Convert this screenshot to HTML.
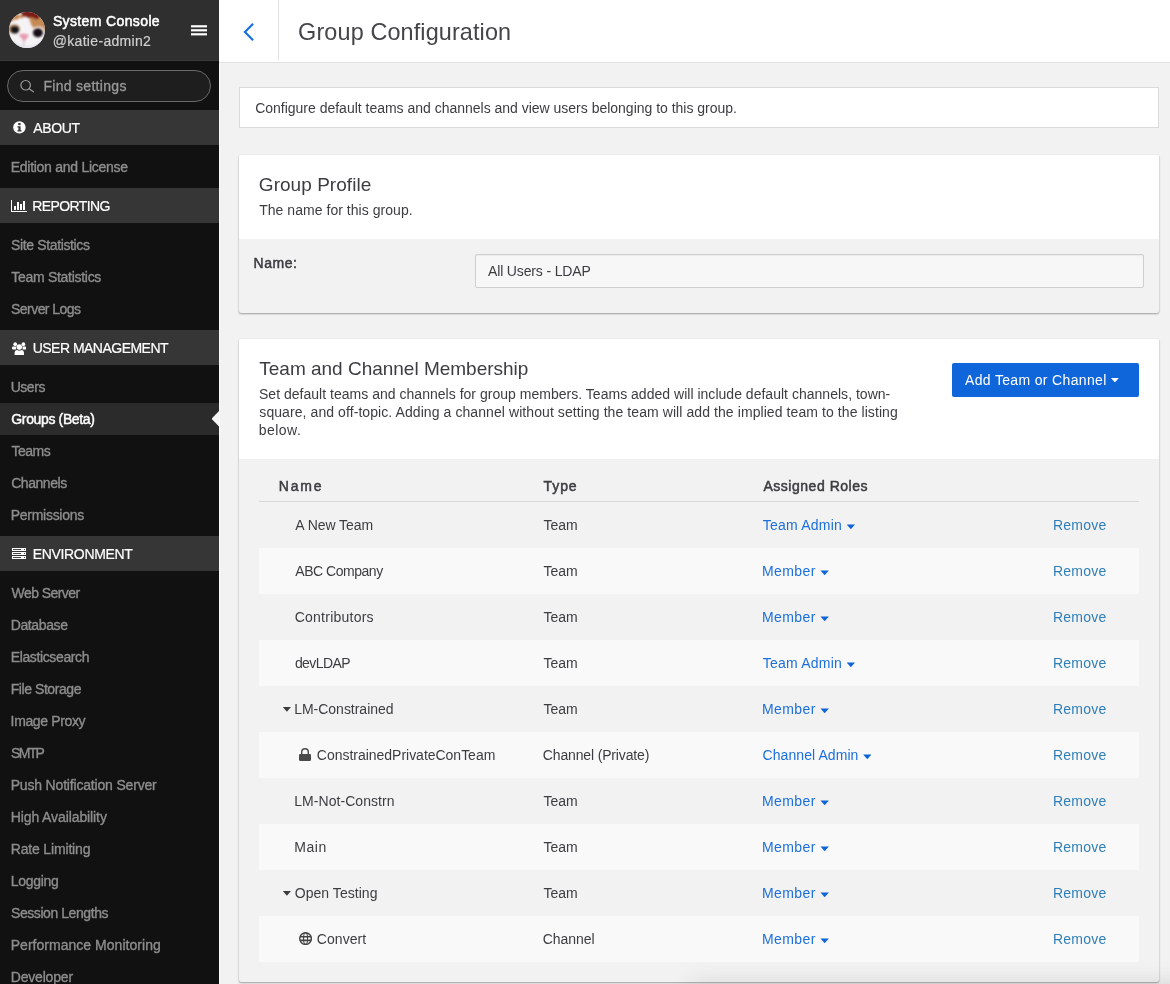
<!DOCTYPE html>
<html lang="en">
<head>
<meta charset="utf-8">
<title>Group Configuration - System Console</title>
<style>
*{box-sizing:border-box;margin:0;padding:0}
html,body{width:1170px;height:984px;overflow:hidden;background:#f2f2f2}
body{opacity:.999;font-family:"Liberation Sans",sans-serif;font-size:14px;color:#3d3c40;position:relative}
a{text-decoration:none}
/* ---------- sidebar ---------- */
#sb{position:absolute;left:0;top:0;width:219px;height:984px;background:#111;overflow:hidden}
#sbh{position:absolute;left:0;top:0;width:219px;height:61px;background:#2f2f2f;border-bottom:1px solid #393939}
#sbh .t1{position:absolute;left:53px;top:12px;font-weight:normal;-webkit-text-stroke:.55px #fff;color:#fff;font-size:14px;line-height:18px;letter-spacing:-.2px;white-space:nowrap}
#sbh .t2{position:absolute;left:53px;top:32px;color:#cfcfcf;-webkit-text-stroke:.2px #cfcfcf;font-size:14px;line-height:18px;letter-spacing:.25px;white-space:nowrap}
#avatar{position:absolute;left:9px;top:12px;width:36px;height:36px}
#burger{position:absolute;left:191px;top:25px;width:16px;height:11px}
#search{position:absolute;left:7px;top:70px;width:204px;height:32px;border:1px solid #6a6a6a;border-radius:16px;background:#1e1e1e}
#search span{position:absolute;left:36px;top:6px;line-height:18px;color:#999;font-size:14px;white-space:nowrap;letter-spacing:.2px}
#search svg{position:absolute;left:12px;top:8px}
.cat{position:absolute;left:0;width:219px;height:35px;background:#363636;color:#fff;font-size:14px;line-height:35px;white-space:nowrap}
.cat span{position:absolute;left:33px;top:1px}
.cat svg{position:absolute}
.it{position:absolute;left:11px;height:18px;line-height:18px;color:#8d8d8d;font-size:14px;white-space:nowrap;letter-spacing:-.2px}
.it{-webkit-text-stroke:.35px #8d8d8d}
.it.on{color:#fff;-webkit-text-stroke:.45px #fff}
.cat span{-webkit-text-stroke:.2px #fff}
#search span{-webkit-text-stroke:.3px #999}
#sel{position:absolute;left:0;top:403px;width:219px;height:32px;background:#2b2b2b}
#sel i{position:absolute;right:0;top:8px;width:7.5px;height:15.6px;background:#f6f6f6;clip-path:polygon(100% 0,0 50%,100% 100%)}
/* ---------- main ---------- */
#edge{position:absolute;left:219px;top:63px;width:1px;height:921px;background:#fbfbfb}
#hd{position:absolute;left:219px;top:0;width:951px;height:63px;background:#fff;border-bottom:1px solid #e2e2e2}
#hd .sep{position:absolute;left:59px;top:0;width:1px;height:60px;background:#e1e1e1}
#hd h1{position:absolute;left:80px;top:15px;font-size:23.4px;line-height:34px;font-weight:normal;color:#454448;white-space:nowrap}
#back{position:absolute;left:23.3px;top:21px}
#banner{position:absolute;left:239px;top:87px;width:920px;height:41px;background:#fff;border:1px solid #dadada}
#banner span{position:absolute;left:15px;top:11px;line-height:18px;white-space:nowrap}
.panel{position:absolute;left:239px;width:920px;background:#f2f2f2;box-shadow:0 1px 2px rgba(0,0,0,.35),0 0 1px rgba(0,0,0,.15);border-radius:2px}
.panel .ph{position:absolute;left:0;top:0;width:920px;background:#fff;border-radius:2px 2px 0 0}
.panel h2{position:absolute;left:20px;font-size:19px;font-weight:normal;line-height:24px;color:#3d3c40;white-space:nowrap}
.panel .sub{position:absolute;left:20px;line-height:18px;color:#3d3c40;white-space:nowrap}
.panel .sub span{display:inline-block}
#p1{top:155px;height:158px}
#p1 .ph{height:84px}
#p1 label{position:absolute;left:15px;top:99px;font-weight:normal;-webkit-text-stroke:.5px #3d3c40;line-height:18px}
#p1 .inp{position:absolute;left:236px;top:99px;width:669px;height:34px;border:1px solid #cfcfcf;border-radius:2px;background:#f7f7f7;box-shadow:inset 0 1px 1px rgba(0,0,0,.05)}
#p1 .inp span{position:absolute;left:12px;top:7px;line-height:18px;white-space:nowrap}
#p2{top:339px;height:643px}
#p2 .ph{height:120px}
#btn{position:absolute;left:713px;top:24px;width:187px;height:34px;background:#0f66da;border-radius:2px;color:#fff;line-height:34px;white-space:nowrap}
#btn span{position:absolute;left:13px;top:0;letter-spacing:.3px}
#btn i{position:absolute;left:158.8px;top:14.8px;width:8.2px;height:4.7px;background:#fff;clip-path:polygon(0 0,100% 0,50% 100%)}
#tbl{position:absolute;left:20px;top:120px;width:880px}
#tbl .th{position:relative;height:43px;border-bottom:1px solid #d8d8d8;font-weight:normal;-webkit-text-stroke:.5px #3d3c40}
#tbl .th span{position:absolute;top:18px;line-height:18px}
.row{position:relative;height:46px;line-height:46px;white-space:nowrap}
.row:nth-child(odd){background:#f9f9f9}
.row span,.row a{position:absolute;top:0}
.row .n{left:36px}
.row .n.ch{left:58px}
.row .ty{left:284px}
.row .ro{left:504px;color:#1b6fdd}
.row .ro em{font-style:normal}
.row .ro i{display:inline-block;vertical-align:middle;margin-left:4.6px;position:relative;top:0.5px;width:8.4px;height:4.7px;background:#0f63d8;clip-path:polygon(0 0,100% 0,50% 100%)}
.row .rm{left:794px;color:#2f7fb8}
.row .car{left:23.8px;top:21px;width:8.2px;height:4.8px;background:#3d3c40;clip-path:polygon(0 0,100% 0,50% 100%)}
.row svg{position:absolute}
#glow{position:absolute;left:700px;top:994px;width:520px;height:20px;box-shadow:0 0 24px 10px rgba(0,0,0,.12);pointer-events:none}
/*FIT-START*/
#sbh .t1{letter-spacing:0.37px;margin-left:-0.1px}
#sbh .t2{letter-spacing:0.32px;margin-left:-0.3px}
#search span{letter-spacing:0.30px;margin-left:-0.6px}
#c1{letter-spacing:-0.35px;margin-left:0.2px}
#c2{letter-spacing:-0.61px;margin-left:-0.8px}
#c3{letter-spacing:-0.52px;margin-left:-0.3px}
#c4{letter-spacing:-0.35px;margin-left:-0.2px}
#i1{letter-spacing:-0.27px;margin-left:-0.3px}
#i2{letter-spacing:-0.36px;margin-left:-0.0px}
#i3{letter-spacing:-0.29px;margin-left:0.3px}
#i4{letter-spacing:-0.54px;margin-left:-0.0px}
#i5{letter-spacing:-0.47px;margin-left:-0.3px}
#i6{letter-spacing:-0.36px;margin-left:0.3px}
#i7{letter-spacing:-0.51px;margin-left:0.5px}
#i8{letter-spacing:-0.45px;margin-left:0.2px}
#i9{letter-spacing:-0.27px;margin-left:-0.3px}
#i10{letter-spacing:-0.55px;margin-left:0.5px}
#i11{letter-spacing:-0.38px;margin-left:-0.3px}
#i12{letter-spacing:-0.37px;margin-left:-0.3px}
#i13{letter-spacing:-0.43px;margin-left:-0.3px}
#i14{letter-spacing:-0.36px;margin-left:-0.4px}
#i15{letter-spacing:-1.67px;margin-left:-0.0px}
#i16{letter-spacing:-0.18px;margin-left:-0.3px}
#i17{letter-spacing:-0.10px;margin-left:-0.3px}
#i18{letter-spacing:-0.16px;margin-left:-0.3px}
#i19{letter-spacing:-0.28px;margin-left:-0.3px}
#i20{letter-spacing:-0.43px;margin-left:-0.0px}
#i21{letter-spacing:0.03px;margin-left:-0.3px}
#i22{letter-spacing:-0.18px;margin-left:-0.3px}
#hd h1{letter-spacing:0.13px;margin-left:-0.9px}
#banner span{letter-spacing:-0.01px;margin-left:0.2px}
#p1 h2{letter-spacing:0.04px;margin-left:-0.2px}
#p1 .sub{letter-spacing:0.04px;margin-left:0.2px}
#p1 label{letter-spacing:0.57px;margin-left:-0.5px}
#p1 .inp span{letter-spacing:-0.15px;margin-left:-0.0px}
#p2 h2{letter-spacing:-0.01px;margin-left:0.3px}
#l1{letter-spacing:0.02px;margin-left:0.0px}
#l2{letter-spacing:0.08px;margin-left:0.3px}
#l3{letter-spacing:0.48px;margin-left:-0.3px}
#btn span{letter-spacing:0.34px}
#h1{letter-spacing:1.84px;margin-left:-0.3px}
#h2{letter-spacing:0.88px;margin-left:0.6px}
#h3{letter-spacing:0.53px;margin-left:0.4px}
#n1{letter-spacing:-0.06px;margin-left:0.3px}
#n2{letter-spacing:-0.47px;margin-left:0.3px}
#n3{letter-spacing:0.24px;margin-left:-0.3px}
#n4{letter-spacing:-0.57px;margin-left:-0.1px}
#n5{letter-spacing:-0.02px;margin-left:-0.8px}
#n6{letter-spacing:-0.02px;margin-left:-0.2px}
#n7{letter-spacing:0.06px;margin-left:-0.8px}
#n8{letter-spacing:0.56px;margin-left:-0.8px}
#n9{letter-spacing:0.05px;margin-left:-0.3px}
#n10{letter-spacing:0.06px;margin-left:-0.2px}
.ty.tm{letter-spacing:0.05px;margin-left:0.4px}
#t6{letter-spacing:-0.15px;margin-left:-0.2px}
#t10{letter-spacing:-0.05px;margin-left:-0.2px}
.ro.ta em{letter-spacing:0.22px;margin-left:-0.2px}
.ro.me em{letter-spacing:0.42px;margin-left:-1.0px}
.ro.ca em{letter-spacing:0.08px;margin-left:-0.5px}
.rm{letter-spacing:0.21px}
/*FIT-END*/
</style>
</head>
<body>
<div id="sb">
  <div id="sbh">
    <svg id="avatar" viewBox="0 0 36 36"><defs><clipPath id="ac"><circle cx="18" cy="18" r="18"/></clipPath><filter id="bl" x="-20%" y="-20%" width="140%" height="140%"><feGaussianBlur stdDeviation="0.8"/></filter></defs>
      <g clip-path="url(#ac)"><rect width="36" height="36" fill="#f5f3f5"/>
      <g filter="url(#bl)">
        <path d="M20 4 L40 0 L40 24 L33 15 L28 14.5 L24 16 L21.5 11 L20.5 7 Z" fill="#c58a54"/>
        <path d="M1 8 L6 2 L15 4 L13 6.5 L10.5 5.5 L8 8 L5.5 7 L3 10Z" fill="#c48550"/>
        <path d="M11 -2 L33 -2 L31 6 L27 7.5 L23 5.5 L19.5 6 L17 4.5 L13.5 4.5 Z" fill="#7d1a17"/>
        <ellipse cx="5.2" cy="17" rx="5.6" ry="4.6" fill="#a87850"/>
        <ellipse cx="5.8" cy="17.7" rx="4.2" ry="3.7" fill="#0d171c"/>
        <ellipse cx="28.9" cy="20.8" rx="5" ry="4.5" fill="#190d17"/>
        <path d="M10 22.6 Q15 20.8 19.8 23 Q19 26 16.8 27 L15.6 29.5 Q14.5 29.8 13.8 28.6 L13.2 26.6 Q10.8 25.6 10 22.6Z" fill="#e89ab2"/>
        <path d="M14.6 29 L15.4 29 L15 36 L13.8 36Z" fill="#cdb0c8"/>
        <path d="M2 27 Q18 42 34 27 L34 40 L2 40Z" fill="#e4e1ec"/>
      </g></g>
    </svg>
    <div class="t1">System Console</div>
    <div class="t2">@katie-admin2</div>
    <svg id="burger" viewBox="0 0 16 11"><rect x="0" y="0.2" width="16" height="2.2" fill="#fff"/><rect x="0" y="4.2" width="16" height="2.2" fill="#fff"/><rect x="0" y="8.2" width="16" height="2.2" fill="#fff"/></svg>
  </div>
  <div id="search">
    <svg width="16" height="16" viewBox="0 0 16 16" fill="none" stroke="#9a9a9a" stroke-width="1.2" stroke-linecap="round"><circle cx="5.65" cy="6.25" r="4.75"/><path d="M9.1 9.7 L13.4 12.8"/></svg>
    <span>Find settings</span>
  </div>

  <div class="cat" style="top:110px">
    <svg style="left:12.8px;top:11.4px" width="12.8" height="12.8" viewBox="0 0 13 13"><circle cx="6.5" cy="6.5" r="6.3" fill="#fff"/><rect x="5.3" y="2.1" width="2.4" height="2.1" fill="#363636"/><path d="M4.5 5.3h3.2v4h1v1.4H4.5V9.3h1V6.7h-1z" fill="#363636"/></svg>
    <span id="c1">ABOUT</span></div>
  <div id="i1" class="it" style="top:158px">Edition and License</div>

  <div class="cat" style="top:188px">
    <svg style="left:11px;top:12px" width="16" height="12" viewBox="0 0 16 12" fill="#fff" shape-rendering="crispEdges"><rect x="0" y="0" width="1" height="12"/><rect x="0" y="11" width="16" height="1"/><rect x="3" y="6" width="2" height="4"/><rect x="6" y="2" width="2" height="8"/><rect x="9" y="4" width="2" height="6"/><rect x="12" y="1" width="2" height="9"/></svg>
    <span id="c2">REPORTING</span></div>
  <div id="i2" class="it" style="top:236px">Site Statistics</div>
  <div id="i3" class="it" style="top:268px">Team Statistics</div>
  <div id="i4" class="it" style="top:300px">Server Logs</div>

  <div class="cat" style="top:330px">
    <svg style="left:11.6px;top:11.6px" width="14.6" height="13.8" viewBox="0 0 15 14" preserveAspectRatio="none" fill="#fff"><circle cx="3.3" cy="2.2" r="1.9"/><circle cx="11.7" cy="2.2" r="1.9"/><path d="M0 5.8Q0 4.6 1.2 4.6H4.6Q3.6 6.2 4.4 7.6H1.2Q0 7.6 0 6.6z"/><path d="M15 5.8Q15 4.6 13.800000000000001 4.6H10.4Q11.4 6.2 10.6 7.6H13.8Q15 7.6 15 6.6z"/><circle cx="7.5" cy="5.2" r="2.8"/><path d="M2.6 12.2Q2.6 8.2 5.2 8.2Q7.5 9.600000000000001 9.8 8.2Q12.4 8.2 12.4 12.2Q12.4 13.8 10.8 13.8H4.2Q2.6 13.8 2.6 12.2z"/></svg>
    <span id="c3">USER MANAGEMENT</span></div>
  <div id="i5" class="it" style="top:378px">Users</div>
  <div id="sel"><i></i></div>
  <div id="i6" class="it on" style="top:410px">Groups (Beta)</div>
  <div id="i7" class="it" style="top:442px">Teams</div>
  <div id="i8" class="it" style="top:474px">Channels</div>
  <div id="i9" class="it" style="top:506px">Permissions</div>

  <div class="cat" style="top:536px">
    <svg style="left:12px;top:12px" width="14" height="11" viewBox="0 0 14 11" shape-rendering="crispEdges"><g fill="#fff"><rect x="0" y="0" width="14" height="3"/><rect x="0" y="4" width="14" height="3"/><rect x="0" y="8" width="14" height="3"/></g><g fill="#363636" fill-opacity=".9"><rect x="1" y="1" width="8" height="1"/><rect x="1" y="5" width="8" height="1"/><rect x="1" y="9" width="8" height="1"/><rect x="12" y="1" width="1" height="1"/><rect x="12" y="5" width="1" height="1"/><rect x="12" y="9" width="1" height="1"/></g></svg>
    <span id="c4">ENVIRONMENT</span></div>
  <div id="i10" class="it" style="top:584px">Web Server</div>
  <div id="i11" class="it" style="top:616px">Database</div>
  <div id="i12" class="it" style="top:648px">Elasticsearch</div>
  <div id="i13" class="it" style="top:680px">File Storage</div>
  <div id="i14" class="it" style="top:712px">Image Proxy</div>
  <div id="i15" class="it" style="top:744px">SMTP</div>
  <div id="i16" class="it" style="top:776px">Push Notification Server</div>
  <div id="i17" class="it" style="top:808px">High Availability</div>
  <div id="i18" class="it" style="top:840px">Rate Limiting</div>
  <div id="i19" class="it" style="top:872px">Logging</div>
  <div id="i20" class="it" style="top:904px">Session Lengths</div>
  <div id="i21" class="it" style="top:936px">Performance Monitoring</div>
  <div id="i22" class="it" style="top:968px">Developer</div>
</div>

<div id="edge"></div>
<div id="hd">
  <svg id="back" width="14" height="22" viewBox="0 0 14 22" fill="none" stroke="#166de0" stroke-width="2.1"><path d="M11.1 2.8 L2.9 11 L11.1 19.2"/></svg>
  <div class="sep"></div>
  <h1>Group Configuration</h1>
</div>

<div id="banner"><span>Configure default teams and channels and view users belonging to this group.</span></div>

<div class="panel" id="p1">
  <div class="ph"></div>
  <h2 style="top:18px">Group Profile</h2>
  <div class="sub" style="top:46px">The name for this group.</div>
  <label>Name:</label>
  <div class="inp"><span>All Users - LDAP</span></div>
</div>

<div class="panel" id="p2">
  <div class="ph"></div>
  <h2 style="top:18px">Team and Channel Membership</h2>
  <div class="sub" style="top:46px;width:650px"><span id="l1">Set default teams and channels for group members. Teams added will include default channels, town-</span><br><span id="l2">square, and off-topic. Adding a channel without setting the team will add the implied team to the listing</span><br><span id="l3">below.</span></div>
  <div id="btn"><span>Add Team or Channel</span><i></i></div>
  <div id="tbl">
    <div class="th"><span id="h1" style="left:20px">Name</span><span id="h2" style="left:284px">Type</span><span id="h3" style="left:504px">Assigned Roles</span></div>
    <div class="row"><span id="n1" class="n">A New Team</span><span class="ty tm">Team</span><a class="ro ta"><em>Team Admin</em><i></i></a><a class="rm">Remove</a></div>
    <div class="row"><span id="n2" class="n">ABC Company</span><span class="ty tm">Team</span><a class="ro me"><em>Member</em><i></i></a><a class="rm">Remove</a></div>
    <div class="row"><span id="n3" class="n">Contributors</span><span class="ty tm">Team</span><a class="ro me"><em>Member</em><i></i></a><a class="rm">Remove</a></div>
    <div class="row"><span id="n4" class="n">devLDAP</span><span class="ty tm">Team</span><a class="ro ta"><em>Team Admin</em><i></i></a><a class="rm">Remove</a></div>
    <div class="row"><span class="car"></span><span id="n5" class="n">LM-Constrained</span><span class="ty tm">Team</span><a class="ro me"><em>Member</em><i></i></a><a class="rm">Remove</a></div>
    <div class="row"><svg style="left:40px;top:16px" width="12" height="14" viewBox="0 0 12 14"><path d="M2.7 6.5V4a3.3 3.3 0 0 1 6.6 0V6.5" fill="none" stroke="#4a4a4a" stroke-width="1.4"/><rect x="0" y="6.1" width="12" height="6.8" rx="1.1" fill="#4a4a4a"/></svg><span id="n6" class="n ch">ConstrainedPrivateConTeam</span><span id="t6" class="ty">Channel (Private)</span><a class="ro ca"><em>Channel Admin</em><i></i></a><a class="rm">Remove</a></div>
    <div class="row"><span id="n7" class="n">LM-Not-Constrn</span><span class="ty tm">Team</span><a class="ro me"><em>Member</em><i></i></a><a class="rm">Remove</a></div>
    <div class="row"><span id="n8" class="n">Main</span><span class="ty tm">Team</span><a class="ro me"><em>Member</em><i></i></a><a class="rm">Remove</a></div>
    <div class="row"><span class="car"></span><span id="n9" class="n">Open Testing</span><span class="ty tm">Team</span><a class="ro me"><em>Member</em><i></i></a><a class="rm">Remove</a></div>
    <div class="row"><svg style="left:40px;top:15.9px" width="13.1" height="13.1" viewBox="0 0 13 13" fill="none" stroke="#444" stroke-width="1.5"><circle cx="6.5" cy="6.5" r="5.8" stroke-width="1.4"/><ellipse cx="6.5" cy="6.5" rx="2" ry="5.8" stroke-width="1.1"/><path d="M1 4.7H12M1 8.3H12" stroke-width="1.6"/></svg><span id="n10" class="n ch">Convert</span><span id="t10" class="ty">Channel</span><a class="ro me"><em>Member</em><i></i></a><a class="rm">Remove</a></div>
  </div>
</div>
<div id="glow"></div>
</body>
</html>
